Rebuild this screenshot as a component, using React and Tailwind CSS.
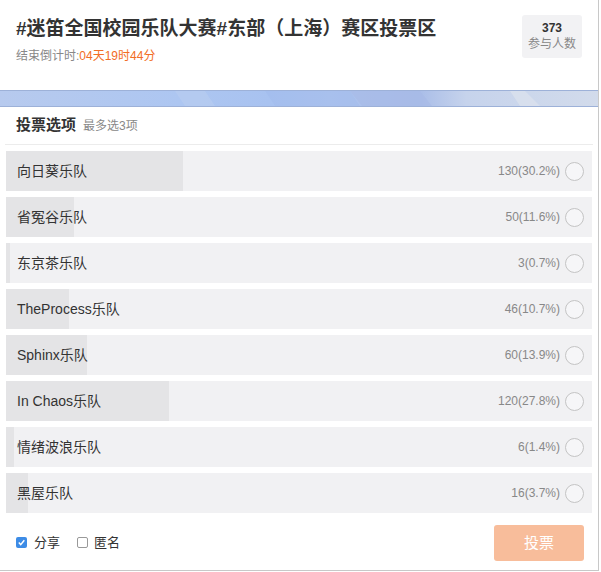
import React from "react";

const rows = [
  ["向日葵乐队", "130(30.2%)", 30.2],
  ["省冤谷乐队", "50(11.6%)", 11.6],
  ["东京茶乐队", "3(0.7%)", 0.7],
  ["TheProcess乐队", "46(10.7%)", 10.7],
  ["Sphinx乐队", "60(13.9%)", 13.9],
  ["In Chaos乐队", "120(27.8%)", 27.8],
  ["情绪波浪乐队", "6(1.4%)", 1.4],
  ["黑屋乐队", "16(3.7%)", 3.7],
];

const font = { fontFamily: '"Liberation Sans", "Noto Sans CJK SC", sans-serif' };

export default function App() {
  return (
    <div className="w-[601px] h-[572px] bg-white" style={font}>
      <div className="w-[599px] h-[571px] border-r border-b border-[#c8c8c8] bg-white flex flex-col">
        {/* header */}
        <div className="flex justify-between pl-[16px] pr-[16px] pt-[15px] h-[90px]">
          <div className="flex flex-col">
            <div className="text-[19px] leading-[26px] mt-[1px] font-bold text-[#333]">#迷笛全国校园乐队大赛#东部（上海）赛区投票区</div>
            <div className="text-[12px] leading-[18px] mt-[5px] text-[#888]">
              结束倒计时:<span className="text-[#f26d25]">04天19时44分</span>
            </div>
          </div>
          <div className="w-[60px] h-[43px] rounded-[3px] bg-[#f2f2f4] flex flex-col items-center justify-center">
            <div className="text-[12px] leading-[15px] font-bold text-[#333]">373</div>
            <div className="text-[12px] leading-[16px] text-[#888]">参与人数</div>
          </div>
        </div>
        {/* blue band */}
        <div className="relative h-[17px] border-t border-b border-[#9db1d8] bg-[linear-gradient(90deg,#b7caee_0%,#adc6f1_30%,#a8c2f0_45%,#aec5ef_55%,#a9bde8_70%,#c6d3ec_78%,#d2dbeb_100%)] overflow-hidden">
          <svg className="absolute inset-0" width="599" height="15" viewBox="0 0 599 15">
            <polygon points="175,0 205,0 215,15 185,15" fill="#b9cdf0" opacity="0.6" />
            <polygon points="265,0 350,0 360,15 275,15" fill="#9fb8ea" opacity="0.35" />
            <polygon points="350,0 420,0 432,15 362,15" fill="#a6b9e6" opacity="0.6" />
            <polygon points="510,0 525,0 540,15 520,15" fill="#dfe5ef" opacity="0.6" />
          </svg>
        </div>
        {/* section title */}
        <div className="flex items-center gap-[7px] pl-[11px] h-[38px] mx-[5px] border-b border-[#ececec]">
          <span className="text-[15px] font-bold text-[#333]">投票选项</span>
          <span className="text-[12px] text-[#888] mt-[1px]">最多选3项</span>
        </div>
        {/* rows */}
        <div className="flex flex-col gap-[6px] px-[6px] pt-[6px]">
          {rows.map(([name, count, pct]) => (
            <div key={name} className="relative h-[40px] bg-[#f1f1f3] flex items-center">
              <div className="absolute left-0 top-0 bottom-0 bg-[#e4e4e6]" style={{ width: `${pct}%` }} />
              <span className="relative pl-[11px] text-[14px] text-[#333] flex-1">{name}</span>
              <span className="relative text-[12px] text-[#888] mr-[5px]">{count}</span>
              <span className="relative w-[19px] h-[19px] rounded-full border border-[#c4c4c4] bg-[#f6f6f8] mr-[8px]" />
            </div>
          ))}
        </div>
        {/* footer */}
        <div className="flex items-center justify-between pl-[16px] pr-[14px] mt-[12px]">
          <div className="flex items-center text-[13px] text-[#333] -mt-[1px]">
            <span className="w-[11px] h-[11px] rounded-[2px] bg-[#3d8ce6] flex items-center justify-center">
              <svg width="9" height="9" viewBox="0 0 9 9">
                <path d="M1.8 4.6 L3.7 6.6 L7.3 2.2" stroke="white" strokeWidth="1.5" fill="none" />
              </svg>
            </span>
            <span className="ml-[7px]">分享</span>
            <span className="ml-[17px] w-[11px] h-[11px] rounded-[2px] border border-[#999] bg-white" />
            <span className="ml-[6px]">匿名</span>
          </div>
          <div className="w-[90px] h-[36px] rounded-[3px] bg-[#f8bd9b] flex items-center justify-center text-white text-[15px]">投票</div>
        </div>
      </div>
    </div>
  );
}
